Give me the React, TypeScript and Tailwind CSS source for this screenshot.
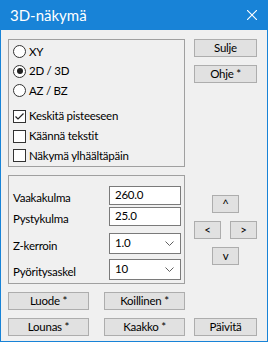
import { ReactNode } from 'react';

function Btn({ children, className = '' }: { children: ReactNode; className?: string }) {
  return (
    <div
      className={`h-[18px] bg-[#e1e1e1] border border-[#adadad] flex items-center justify-center text-[11.5px] leading-none text-black ${className}`}
    >
      {children}
    </div>
  );
}

function Radio({ label, checked = false, className = '' }: { label: string; checked?: boolean; className?: string }) {
  return (
    <div className={`flex items-center ${className}`}>
      <div className="w-[13px] h-[13px] rounded-full border border-[#333333] bg-white flex items-center justify-center">
        {checked && <div className="w-[6px] h-[6px] rounded-full bg-[#222222]"></div>}
      </div>
      <span className="ml-[3px] text-[11.5px] leading-none">{label}</span>
    </div>
  );
}

function Check({ label, checked = false, className = '' }: { label: string; checked?: boolean; className?: string }) {
  return (
    <div className={`flex items-center ${className}`}>
      <div className="w-[13px] h-[13px] border border-[#333333] bg-white">
        {checked && (
          <svg width="11" height="11" viewBox="0 0 11 11">
            <path d="M1.5 5.5 L4 8 L9.5 2.5" fill="none" stroke="#222" strokeWidth="1.2" />
          </svg>
        )}
      </div>
      <span className="ml-[3px] text-[11.5px] leading-none">{label}</span>
    </div>
  );
}

function Field({ label, value, select = false, className = '' }: { label: string; value: string; select?: boolean; className?: string }) {
  return (
    <div className={`flex items-center ${select ? 'h-[21px]' : 'h-[19px]'} ${className}`}>
      <span className="w-[100px] pl-[4px] pt-[5px] text-[11.5px] leading-none">{label}</span>
      <div className="w-[72px] h-full border border-[#7a7a7a] bg-white flex items-center justify-between pl-[5px] pr-[6px] pb-[2px]">
        <span className="text-[11.5px] leading-none">{value}</span>
        {select && (
          <svg width="9" height="5" viewBox="0 0 9 5" className="mt-[2px]">
            <path d="M0.5 0.5 L4.5 4.5 L8.5 0.5" fill="none" stroke="#606060" strokeWidth="1" />
          </svg>
        )}
      </div>
    </div>
  );
}

export default function App() {
  return (
    <div className="w-[268px] h-[342px] flex flex-col bg-[#1883d7] font-['Lato',sans-serif] tracking-[-0.25px] text-black">
      {/* Title bar */}
      <div className="h-[30px] flex items-center justify-between pl-[10px] pr-[11px] text-white">
        <span className="text-[15px] leading-none tracking-normal">3D-näkymä</span>
        <svg width="10" height="10" viewBox="0 0 10 10">
          <path d="M0 0 L10 10 M10 0 L0 10" stroke="white" strokeWidth="1.1" />
        </svg>
      </div>

      {/* Body */}
      <div className="flex-1 mx-px mb-px bg-[#f0f0f0] pl-[7px] pt-[9px]">
        <div className="flex">
          <div className="w-[177px] flex flex-col gap-[8px]">
            {/* View options */}
            <div className="h-[128px] border border-[#a0a0a0] pl-[4px] pt-[2px] flex flex-col">
              <Radio label="XY" className="h-[19px]" />
              <Radio label="2D / 3D" checked className="h-[20px]" />
              <Radio label="AZ / BZ" className="h-[19px]" />
              <Check label="Keskitä pisteeseen" checked className="h-[20px] mt-[6px]" />
              <Check label="Käännä tekstit" className="h-[20px]" />
              <Check label="Näkymä ylhäältäpäin" className="h-[19px]" />
            </div>

            {/* Angles */}
            <div className="h-[109px] border border-[#a0a0a0] pt-[10px] flex flex-col">
              <Field label="Vaakakulma" value="260.0" />
              <Field label="Pystykulma" value="25.0" className="mt-[2px]" />
              <Field label="Z-kerroin" value="1.0" select className="mt-[7px]" />
              <Field label="Pyöritysaskel" value="10" select className="mt-[5px]" />
            </div>
          </div>

          <div className="ml-[9px] w-[63px] flex flex-col">
            <Btn>Sulje</Btn>
            <Btn className="mt-[8px]">Ohje *</Btn>
            <div className="mt-[112px] flex justify-center">
              <Btn className="w-[27px]">^</Btn>
            </div>
            <div className="mt-[8px] flex justify-between">
              <Btn className="w-[27px]">&lt;</Btn>
              <Btn className="w-[27px]">&gt;</Btn>
            </div>
            <div className="mt-[8px] flex justify-center">
              <Btn className="w-[27px]">v</Btn>
            </div>
          </div>
        </div>

        <div className="mt-[8px] flex">
          <Btn className="w-[81px]">Luode *</Btn>
          <Btn className="w-[81px] ml-[15px]">Koillinen *</Btn>
        </div>
        <div className="mt-[8px] flex">
          <Btn className="w-[81px]">Lounas *</Btn>
          <Btn className="w-[81px] ml-[15px]">Kaakko *</Btn>
          <Btn className="w-[63px] ml-[9px]">Päivitä</Btn>
        </div>
      </div>
    </div>
  );
}
